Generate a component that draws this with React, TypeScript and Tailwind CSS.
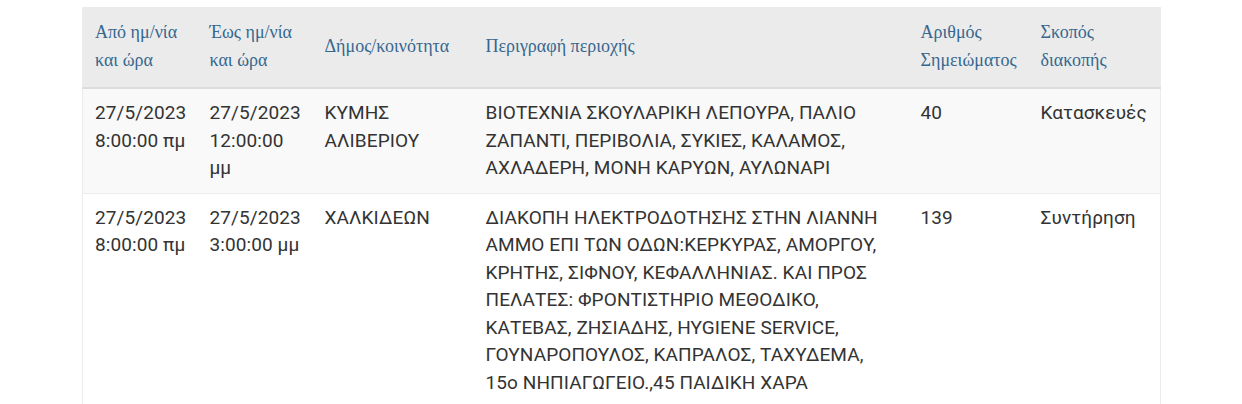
interface Outage {
  from: string;
  to: string;
  municipality: string;
  area: string;
  note: string;
  reason: string;
}

const outages: Outage[] = [
  {
    from: "27/5/2023 8:00:00 πμ",
    to: "27/5/2023 12:00:00 μμ",
    municipality: "ΚΥΜΗΣ ΑΛΙΒΕΡΙΟΥ",
    area: "ΒΙΟΤΕΧΝΙΑ ΣΚΟΥΛΑΡΙΚΗ ΛΕΠΟΥΡΑ, ΠΑΛΙΟ ΖΑΠΑΝΤΙ, ΠΕΡΙΒΟΛΙΑ, ΣΥΚΙΕΣ, ΚΑΛΑΜΟΣ, ΑΧΛΑΔΕΡΗ, ΜΟΝΗ ΚΑΡΥΩΝ, ΑΥΛΩΝΑΡΙ",
    note: "40",
    reason: "Κατασκευές",
  },
  {
    from: "27/5/2023 8:00:00 πμ",
    to: "27/5/2023 3:00:00 μμ",
    municipality: "ΧΑΛΚΙΔΕΩΝ",
    area: "ΔΙΑΚΟΠΗ ΗΛΕΚΤΡΟΔΟΤΗΣΗΣ ΣΤΗΝ ΛΙΑΝΝΗ ΑΜΜΟ ΕΠΙ ΤΩΝ ΟΔΩΝ:ΚΕΡΚΥΡΑΣ, ΑΜΟΡΓΟΥ, ΚΡΗΤΗΣ, ΣΙΦΝΟΥ, ΚΕΦΑΛΛΗΝΙΑΣ. ΚΑΙ ΠΡΟΣ ΠΕΛΑΤΕΣ: ΦΡΟΝΤΙΣΤΗΡΙΟ ΜΕΘΟΔΙΚΟ, ΚΑΤΕΒΑΣ, ΖΗΣΙΑΔΗΣ, HYGIENE SERVICE, ΓΟΥΝΑΡΟΠΟΥΛΟΣ, ΚΑΠΡΑΛΟΣ, ΤΑΧΥΔΕΜΑ, 15ο ΝΗΠΙΑΓΩΓΕΙΟ.,45 ΠΑΙΔΙΚΗ ΧΑΡΑ",
    note: "139",
    reason: "Συντήρηση",
  },
];

const headers = [
  "Από ημ/νία και ώρα",
  "Έως ημ/νία και ώρα",
  "Δήμος/κοινότητα",
  "Περιγραφή περιοχής",
  "Αριθμός Σημειώματος",
  "Σκοπός διακοπής",
];

const App = () => {
  return (
    <div className="w-full min-h-screen bg-white pt-[7px] pl-[82px] pr-[82px]">
      <table className="w-[1078px] table-fixed border-collapse border-x border-[#ececec]">
        <colgroup>
          <col className="w-[115px]" />
          <col className="w-[115px]" />
          <col className="w-[161px]" />
          <col className="w-[435px]" />
          <col className="w-[120px]" />
          <col className="w-[132px]" />
        </colgroup>
        <thead>
          <tr className="bg-[#ebebeb] border-b-2 border-[#dcdcdc]">
            {headers.map((h) => (
              <th
                key={h}
                className="text-left align-middle font-normal pl-[12px] pr-[6px] pt-[11px] pb-[13px] text-[18px] leading-[28px] text-[#36678f] font-['Liberation_Serif',serif]"
              >
                {h}
              </th>
            ))}
          </tr>
        </thead>
        <tbody>
          {outages.map((o, i) => (
            <tr
              key={i}
              className={`${i % 2 === 0 ? "bg-[#f9f9f9]" : "bg-white"} border-b border-[#ececec] align-top`}
            >
              {[o.from, o.to, o.municipality, o.area, o.note, o.reason].map((v, j) => (
                <td
                  key={j}
                  className={`${j === 3 ? "pr-[22px]" : "pr-[6px]"} pl-[12px] pt-[10px] pb-[11px] text-[19px] tracking-[0.1px] leading-[27.5px] text-[#333333] font-['Roboto',sans-serif]`}
                >
                  {v}
                </td>
              ))}
            </tr>
          ))}
        </tbody>
      </table>
    </div>
  );
};

export default App;
